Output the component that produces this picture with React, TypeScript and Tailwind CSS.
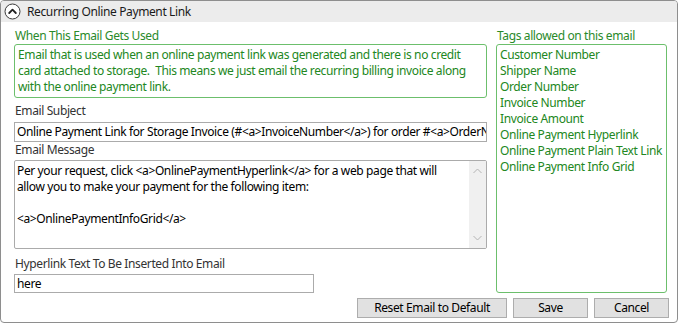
import React from "react";

function ChevronCircle() {
  return (
    <svg width="17" height="17" viewBox="0 0 17 17" className="block">
      <circle cx="8.5" cy="8.5" r="7.5" fill="#ffffff" stroke="#3a3a3a" strokeWidth="1" />
      <polyline points="5.2,10 8.5,6.7 11.8,10" fill="none" stroke="#222" strokeWidth="1.8" strokeLinecap="round" strokeLinejoin="round" />
    </svg>
  );
}

function SmallChevron({ up }: { up: boolean }) {
  return (
    <svg width="9" height="6" viewBox="0 0 9 6" className="block">
      <polyline
        points={up ? "0.5,5 4.5,1 8.5,5" : "0.5,1 4.5,5 8.5,1"}
        fill="none"
        stroke="#b4b4b4"
        strokeWidth="1"
      />
    </svg>
  );
}

const tags = [
  "Customer Number",
  "Shipper Name",
  "Order Number",
  "Invoice Number",
  "Invoice Amount",
  "Online Payment Hyperlink",
  "Online Payment Plain Text Link",
  "Online Payment Info Grid",
];

export default function App() {
  return (
    <div className="w-[681px] h-[325px] bg-white font-['Noto_Sans',sans-serif] text-[12px] leading-[16px] tracking-[-0.38px] text-[#1e1e1e]">
      <div className="w-[678px] h-[323px] border border-[#8e8e8e] rounded-[4px] overflow-hidden flex flex-col bg-white">
        <div className="h-[21px] bg-[#ececec] flex items-center pl-[3px] shrink-0">
          <ChevronCircle />
          <span className="ml-[6px] text-[#1a1a1a]">Recurring Online Payment Link</span>
        </div>
        <div className="flex pl-[13px]">
          <div className="w-[473px] flex flex-col">
            <div className="mt-[6px] h-[16px] pl-[1px] text-[#2a8a2a]">When This Email Gets Used</div>
            <div className="h-[54px] border border-[#6cbf6c] rounded-[3px] px-[3px] py-[2px] text-[#228722] whitespace-pre overflow-hidden">
              <div>Email that is used when an online payment link was generated and there is no credit</div>
              <div>card attached to storage.  This means we just email the recurring billing invoice along</div>
              <div>with the online payment link.</div>
            </div>
            <div className="mt-[5px] h-[16px] pl-[1px] text-[#333]">Email Subject</div>
            <div className="mt-[3px] h-[20px] border border-[#ababab] px-[2px] leading-[18px] whitespace-nowrap overflow-hidden text-black">
              Online Payment Link for Storage Invoice (#&lt;a&gt;InvoiceNumber&lt;/a&gt;) for order #&lt;a&gt;OrderNumber&lt;/a&gt;
            </div>
            <div className="h-[16px] pl-[1px] text-[#333]">Email Message</div>
            <div className="mt-[2px] h-[89px] border border-[#ababab] rounded-[2px] flex overflow-hidden">
              <div className="flex-1 px-[2px] pt-[2px] whitespace-pre text-black overflow-hidden">
                <div>Per your request, click &lt;a&gt;OnlinePaymentHyperlink&lt;/a&gt; for a web page that will</div>
                <div>allow you to make your payment for the following item:</div>
                <div>&nbsp;</div>
                <div>&lt;a&gt;OnlinePaymentInfoGrid&lt;/a&gt;</div>
              </div>
              <div className="w-[17px] bg-[#f0f0f0] flex flex-col items-center justify-between py-[7px]">
                <SmallChevron up={true} />
                <SmallChevron up={false} />
              </div>
            </div>
            <div className="mt-[7px] h-[16px] pl-[1px] text-[#333]">Hyperlink Text To Be Inserted Into Email</div>
            <div className="mt-[2px] h-[19px] w-[300px] border border-[#ababab] px-[2px] leading-[17px] text-black">here</div>
          </div>
          <div className="ml-[9px] w-[171px] flex flex-col">
            <div className="mt-[6px] h-[16px] pl-[1px] text-[#2a8a2a] whitespace-nowrap">Tags allowed on this email</div>
            <div className="h-[249px] border border-[#6cbf6c] rounded-[3px] px-[3px] py-[2px] text-[#228722]">
              {tags.map((t) => (
                <div key={t} className="whitespace-nowrap">{t}</div>
              ))}
            </div>
          </div>
        </div>
        <div className="mt-[5px] flex justify-end gap-[6px] pr-[8px]">
          <button className="w-[150px] h-[20px] bg-[#e1e1e1] border border-[#adadad] text-black leading-[18px]">Reset Email to Default</button>
          <button className="w-[75px] h-[20px] bg-[#e1e1e1] border border-[#adadad] text-black leading-[18px]">Save</button>
          <button className="w-[75px] h-[20px] bg-[#e1e1e1] border border-[#adadad] text-black leading-[18px]">Cancel</button>
        </div>
      </div>
    </div>
  );
}
